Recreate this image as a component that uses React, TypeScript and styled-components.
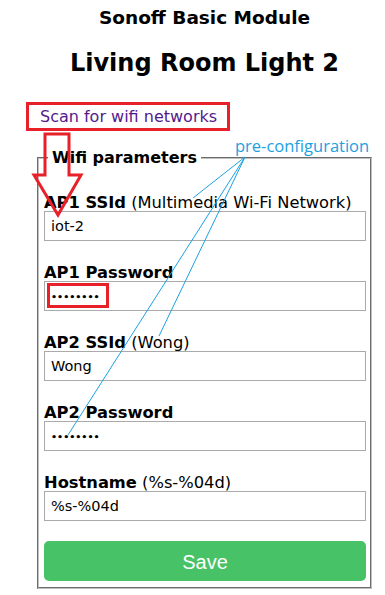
import * as React from 'react';
import styled, { createGlobalStyle } from 'styled-components';

const GlobalStyle = createGlobalStyle`
	body {
		margin: 0;
		background: #fff;
		font-family: "DejaVu Sans", Verdana, sans-serif;
		color: #000;
	}
`;

const Page = styled.div`
	position: relative;
	width: 385px;
	height: 595px;
	overflow: hidden;
`;

const Column = styled.div`
	width: 335px;
	margin-left: 37px;
	display: flex;
	flex-direction: column;
`;

const ModuleTitle = styled.h3`
	margin: 7px 0 0;
	height: 21px;
	font-size: 18.5px;
	line-height: 21px;
	text-align: center;
	font-weight: bold;
`;

const DeviceName = styled.h2`
	margin: 20px 0 0;
	height: 30px;
	font-size: 24px;
	line-height: 30px;
	text-align: center;
	font-weight: bold;
`;

const ScanLink = styled.a`
	margin: 29px 0 0 3px;
	height: 20px;
	line-height: 20px;
	font-size: 16px;
	color: #551a8b;
	text-decoration: none;
`;

const Fieldset = styled.fieldset`
	margin: 21px 0 0;
	padding: 4px 4px 6px 5px;
	border: 2px groove #c0c0c0;
	display: flex;
	flex-direction: column;
`;

const Legend = styled.legend`
	padding: 0 4px;
	margin-left: 4px;
	font-size: 16px;
	font-weight: bold;
	line-height: 20px;
`;

const Field = styled.div`
	display: flex;
	flex-direction: column;
	margin-top: ${p => (p.$first ? '21px' : '22px')};
`;

const Label = styled.label`
	height: 18px;
	line-height: 20px;
	font-size: 16.3px;
	font-weight: bold;
	white-space: nowrap;
`;

const Hint = styled.span`
	font-weight: normal;
`;

const Input = styled.input`
	box-sizing: border-box;
	width: 100%;
	height: 30px;
	margin: 0;
	padding: 0 6px;
	border: 1px solid #aaa;
	font-family: "DejaVu Sans", Verdana, sans-serif;
	font-size: ${p => (p.type === 'password' ? '9.5px' : '14.5px')};
	font-weight: ${p => (p.type === 'password' ? 'bold' : 'normal')};
	color: #000;
	background: #fff;
	outline: none;
`;

const SaveButton = styled.button`
	margin-top: 20px;
	height: 40px;
	border: 0;
	border-radius: 5px;
	background: #47c266;
	color: #fff;
	font-family: "Liberation Sans", Arial, sans-serif;
	font-size: 20px;
	line-height: 40px;
	cursor: pointer;
`;

const Overlay = styled.svg`
	position: absolute;
	left: 0;
	top: 0;
	pointer-events: none;
`;

const Note = styled.span`
	position: absolute;
	left: 235px;
	top: 135px;
	font-family: "Open Sans", "Liberation Sans", sans-serif;
	font-size: 16.5px;
	line-height: 22px;
	color: #1ba1e2;
`;

interface IField {
	label: string,
	hint?: string,
	value: string,
	type?: string,
}

const fields: IField[] = [
	{ label: 'AP1 SSId', hint: '(Multimedia Wi-Fi Network)', value: 'iot-2' },
	{ label: 'AP1 Password', value: '********', type: 'password' },
	{ label: 'AP2 SSId', hint: '(Wong)', value: 'Wong' },
	{ label: 'AP2 Password', value: '********', type: 'password' },
	{ label: 'Hostname', hint: '(%s-%04d)', value: '%s-%04d' },
];

const Annotations = () => (
	<Overlay width="385" height="595" viewBox="0 0 385 595">
		<rect x="27.5" y="103.5" width="201" height="26" fill="none" stroke="#e8202a" strokeWidth="3" />
		<rect x="48.5" y="284.5" width="59" height="22" fill="none" stroke="#e8202a" strokeWidth="3" />
		<path
			d="M45 134 H69 V175 H81 L58 215 L34 175 H45 Z"
			fill="none"
			stroke="#e8202a"
			strokeWidth="3"
			strokeLinejoin="miter"
		/>
		<g stroke="#1ba1e2" strokeWidth="1" fill="none">
			<line x1="245" y1="157" x2="193" y2="198" />
			<line x1="245" y1="157" x2="159" y2="336" />
			<line x1="245" y1="157" x2="68" y2="435" />
		</g>
	</Overlay>
);

export default function App() {
	return (
		<Page>
			<GlobalStyle />
			<Column>
				<ModuleTitle>Sonoff Basic Module</ModuleTitle>
				<DeviceName>Living Room Light 2</DeviceName>
				<ScanLink href="#">Scan for wifi networks</ScanLink>
				<Fieldset>
					<Legend>Wifi parameters</Legend>
					{fields.map((f, i) => (
						<Field key={f.label} $first={i === 0}>
							<Label>
								{f.label}
								{f.hint ? <Hint> {f.hint}</Hint> : null}
							</Label>
							<Input type={f.type || 'text'} defaultValue={f.value} readOnly />
						</Field>
					))}
					<SaveButton>Save</SaveButton>
				</Fieldset>
			</Column>
			<Annotations />
			<Note>pre-configuration</Note>
		</Page>
	);
}
